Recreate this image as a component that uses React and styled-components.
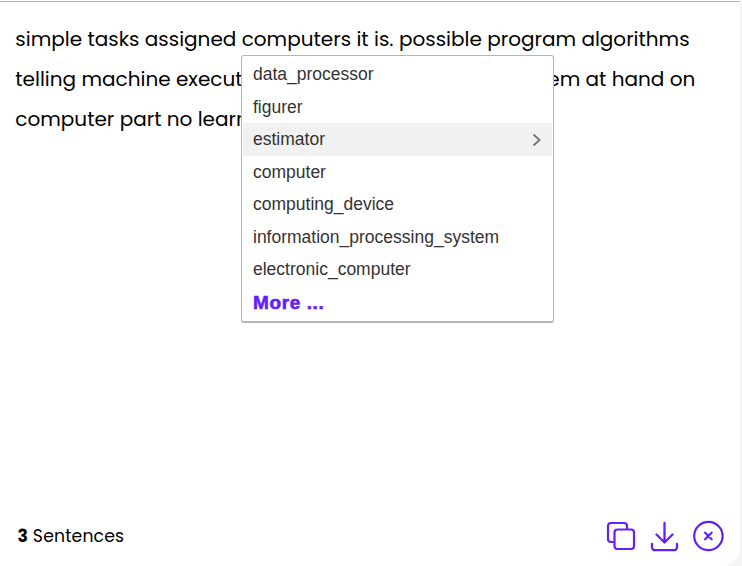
import React from 'react';
import styled, { createGlobalStyle } from 'styled-components';

const GlobalStyle = createGlobalStyle`
  * { box-sizing: border-box; }
  body { margin: 0; background: #f4f4f4; overflow: hidden; }
`;

const Editor = styled.main`
  position: relative;
  display: flex;
  flex-direction: column;
  width: 740px;
  height: 566px;
  padding-top: 19px;
  background: linear-gradient(#fff 1px, #a0bcd8 1px, #a0bcd8 2px, #fff 2px);
  border-bottom-right-radius: 18px;
  color: #000;
  font-family: Poppins, Inter, sans-serif;
`;

const Content = styled.div`
  flex: 1;
  padding-left: 15.3px;
  font-size: 20px;
  font-weight: 400;
  line-height: 40px;
`;

const Line = styled.div`
  display: flex;
  justify-content: space-between;
  width: 680px;
  white-space: pre;
`;

const Footer = styled.footer`
  display: flex;
  align-items: center;
  justify-content: space-between;
  height: 60px;
  padding: 0 16px 0 17.5px;
`;

const Count = styled.div`
  font-size: 17.2px;
  font-weight: 400;
  letter-spacing: 0.18px;
  b { font-weight: 700; }
`;

const Actions = styled.div`
  display: flex;
  align-items: center;
  gap: 13px;
`;

const IconButton = styled.button`
  display: flex;
  padding: 0;
  border: 0;
  background: none;
  color: #6320fa;
`;

const Menu = styled.div`
  position: absolute;
  top: 55px;
  left: 241px;
  width: 313px;
  height: 268px;
  padding: 2.4px 1px 1px;
  border: 1px solid #b5b5b5;
  border-bottom: 2px solid #b5b5b5;
  border-radius: 3px;
  background: #fff;
  font-family: 'Liberation Sans', Arial, sans-serif;
`;

const MenuItem = styled.div`
  display: flex;
  align-items: center;
  justify-content: space-between;
  height: 32.5px;
  padding: 0 10px 0 10px;
  background: ${({ $active }) => ($active ? '#f1f1f1' : 'transparent')};
  color: #333;
  font-size: 17.5px;
`;

const More = styled(MenuItem)`
  padding-top: 2px;
  color: #6320fa;
  font-size: 19px;
  font-weight: 700;
  letter-spacing: 0.6px;
  -webkit-text-stroke: 0.6px #6320fa;
`;

const options = ['data_processor', 'figurer', 'estimator', 'computer', 'computing_device', 'information_processing_system', 'electronic_computer'];

const stroke = { fill: 'none', stroke: 'currentColor', strokeLinecap: 'round', strokeLinejoin: 'round' };

const CopyIcon = () => (
  <svg width="30" height="32" viewBox="0 0 30 32" strokeWidth="2.2" {...stroke}>
    <path d="M8 22H5a3 3 0 0 1-3-3V6a3 3 0 0 1 3-3h13a3 3 0 0 1 3 3v3" />
    <rect x="8.5" y="9.5" width="19.5" height="19.5" rx="3" />
  </svg>
);

const DownloadIcon = () => (
  <svg width="30" height="32" viewBox="0 0 30 32" strokeWidth="2.3" {...stroke}>
    <path d="M15.5 3v19M7.5 14.5l8 8 8-8M3 24v3.2a3 3 0 0 0 3 3h19a3 3 0 0 0 3-3V24" />
  </svg>
);

const ClearIcon = () => (
  <svg width="32" height="32" viewBox="0 0 32 32" strokeWidth="2.2" {...stroke}>
    <circle cx="16.4" cy="16" r="14.2" />
    <path d="M13.1 12.7l6.6 6.6M19.7 12.7l-6.6 6.6" />
  </svg>
);

const Chevron = () => (
  <svg width="10" height="14" viewBox="0 0 10 14" {...stroke} strokeLinecap="butt" strokeLinejoin="miter" stroke="#777" strokeWidth="2">
    <path d="M1.5 1.5L7.5 7l-6 5.5" />
  </svg>
);

export default function App() {
  return (
    <>
      <GlobalStyle />
      <Editor>
        <Content>
          <Line><span>simple tasks assigned computers it is. possible program algorithms</span></Line>
          <Line><span>telling machine execut</span><span>em at hand on</span></Line>
          <Line><span>computer part no learn</span></Line>
        </Content>
        <Footer>
          <Count><b>3</b> Sentences</Count>
          <Actions>
            <IconButton aria-label="Copy"><CopyIcon /></IconButton>
            <IconButton aria-label="Download"><DownloadIcon /></IconButton>
            <IconButton aria-label="Clear"><ClearIcon /></IconButton>
          </Actions>
        </Footer>
        <Menu>
          {options.map((word) => (
            <MenuItem key={word} $active={word === 'estimator'}>
              {word}
              {word === 'estimator' && <Chevron />}
            </MenuItem>
          ))}
          <More>More ...</More>
        </Menu>
      </Editor>
    </>
  );
}
